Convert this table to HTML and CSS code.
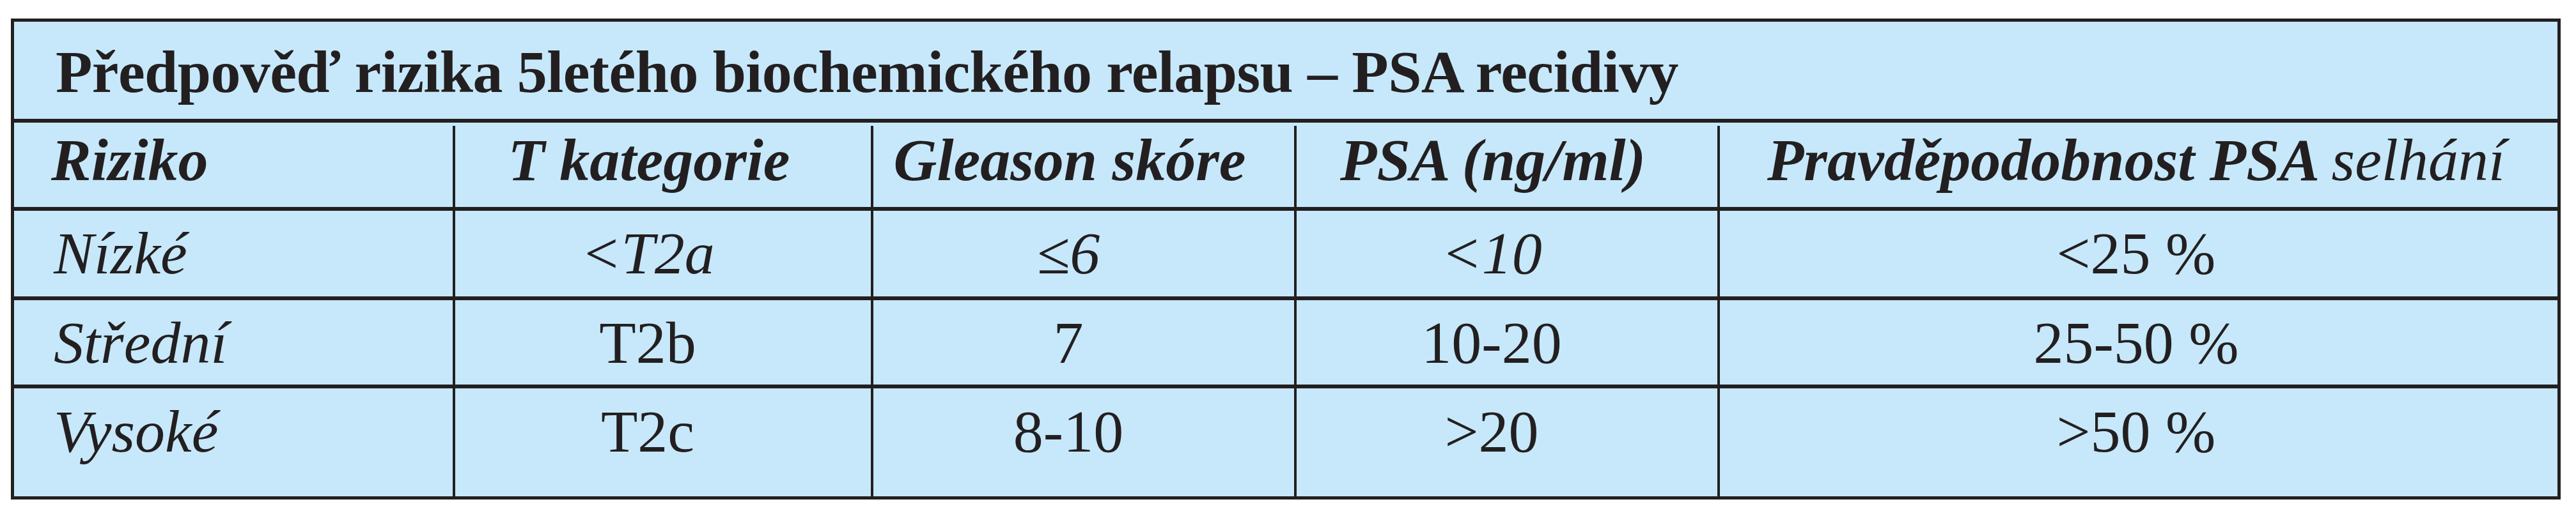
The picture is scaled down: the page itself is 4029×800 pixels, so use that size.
FILE: index.html
```html
<!DOCTYPE html>
<html lang="cs">
<head>
<meta charset="utf-8">
<title>Předpověď rizika 5letého biochemického relapsu – PSA recidivy</title>
<link rel="stylesheet" href="styles.css">
</head>
<body>
<table class="risk">
  <colgroup>
    <col class="c1"><col class="c2"><col class="c3"><col class="c4"><col class="c5">
  </colgroup>
  <tr class="title-row">
    <td colspan="5" class="title">Předpověď rizika 5letého biochemického relapsu – PSA recidivy</td>
  </tr>
  <tr class="head-row">
    <td class="first">Riziko</td>
    <td class="mid">T kategorie</td>
    <td class="mid">Gleason skóre</td>
    <td class="mid">PSA (ng/ml)</td>
    <td class="last">Pravděpodobnost PSA <span class="light">selhání</span></td>
  </tr>
  <tr class="row row1">
    <td class="first it">Nízké</td>
    <td class="mid it">&lt;T2a</td>
    <td class="mid it">≤6</td>
    <td class="mid it">&lt;10</td>
    <td class="last">&lt;25 %</td>
  </tr>
  <tr class="row row2">
    <td class="first it">Střední</td>
    <td class="mid">T2b</td>
    <td class="mid">7</td>
    <td class="mid">10-20</td>
    <td class="last">25-50 %</td>
  </tr>
  <tr class="row row3">
    <td class="first it">Vysoké</td>
    <td class="mid">T2c</td>
    <td class="mid">8-10</td>
    <td class="mid">&gt;20</td>
    <td class="last">&gt;50 %</td>
  </tr>
</table>
</body>
</html>
```
FILE: styles.css
```css
html, body {
  margin: 0;
  padding: 0;
  background: #ffffff;
}

body {
  padding: 29px 0 0 17px;
}

.risk {
  table-layout: fixed;
  border-collapse: separate;
  border-spacing: 0;
  width: 3988px;
  border: 5px solid #231f20;
  background: #c6e8fa;
  font-family: "Liberation Serif", "Times New Roman", serif;
  font-size: 94px;
  line-height: 94px;
  color: #231f20;
}

.c1 { width: 690px; }
.c2 { width: 654px; }
.c3 { width: 662px; }
.c4 { width: 662px; }
.c5 { width: 1310px; }

.risk td {
  box-sizing: border-box;
  vertical-align: top;
  white-space: nowrap;
  padding: 0;
  border-bottom: 6px solid #231f20;
}

.risk .row3 td {
  border-bottom: 0;
}

/* title row */
.title {
  font-weight: bold;
  letter-spacing: -0.6px;
  padding: 31px 0 27px 65px !important;
  text-align: left;
}

/* header row: vertical rules start a little below the thick line */
.head-row td {
  font-weight: bold;
  font-style: italic;
  padding-top: 11px !important;
  padding-bottom: 27px !important;
}

.head-row td.first,
.head-row td.mid {
  background: linear-gradient(#231f20, #231f20) right bottom / 4px calc(100% - 5px) no-repeat;
}

.head-row .light {
  font-weight: normal;
}

/* body rows */
.row td.first,
.row td.mid {
  border-right: 4px solid #231f20;
}

.row1 td { padding-top: 19px !important; padding-bottom: 21px !important; }
.row2 td { padding-top: 19px !important; padding-bottom: 19px !important; }
.row3 td { padding-top: 20px !important; padding-bottom: 55px !important; }

.first {
  text-align: left;
  padding-left: 62px !important;
}

.head-row td.first {
  padding-left: 58px !important;
}

.mid {
  text-align: center;
  padding-right: 48px !important;
}

.last {
  text-align: center;
  padding-right: 8px !important;
}

.it {
  font-style: italic;
}
```
